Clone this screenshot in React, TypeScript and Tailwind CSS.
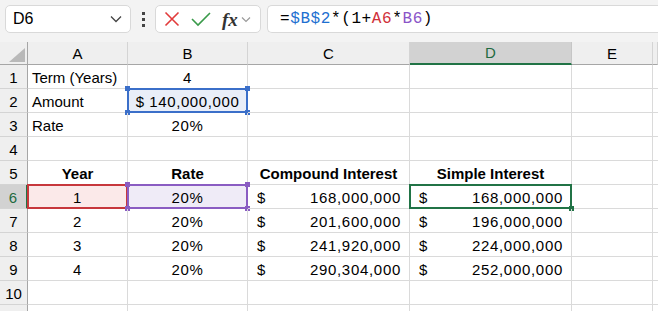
import React from 'react';

const cols = ['A', 'B', 'C', 'D', 'E', ''];

type Cell = { text?: string; align?: 'left' | 'center'; bold?: boolean; money?: string };

const rows: Cell[][] = [
  [{ text: 'Term (Years)', align: 'left' }, { text: '4' }, {}, {}],
  [{ text: 'Amount', align: 'left' }, { text: '$ 140,000,000' }, {}, {}],
  [{ text: 'Rate', align: 'left' }, { text: '20%' }, {}, {}],
  [{}, {}, {}, {}],
  [{ text: 'Year', bold: true }, { text: 'Rate', bold: true }, { text: 'Compound Interest', bold: true }, { text: 'Simple Interest', bold: true }],
  [{ text: '1' }, { text: '20%' }, { money: '168,000,000' }, { money: '168,000,000' }],
  [{ text: '2' }, { text: '20%' }, { money: '201,600,000' }, { money: '196,000,000' }],
  [{ text: '3' }, { text: '20%' }, { money: '241,920,000' }, { money: '224,000,000' }],
  [{ text: '4' }, { text: '20%' }, { money: '290,304,000' }, { money: '252,000,000' }],
  [{}, {}, {}, {}],
  [{}, {}, {}, {}],
];

// highlight boxes drawn over cells (formula references + active cell)
const marks: Record<string, { border: string; bg: string; handle: string; handles: 'all' | 'corner' | 'ticks' }> = {
  '1-1': { border: 'border-[#3b6fc9]', bg: 'bg-[#e9eef8]', handle: 'bg-[#3b6fc9]', handles: 'all' },
  '5-0': { border: 'border-[#c7373c]', bg: 'bg-[#fbe9e9]', handle: 'bg-[#c7373c]', handles: 'ticks' },
  '5-1': { border: 'border-[#8a5cc2]', bg: 'bg-[#efebf7]', handle: 'bg-[#8a5cc2]', handles: 'all' },
  '5-3': { border: 'border-[#217346]', bg: 'bg-white', handle: 'bg-[#217346]', handles: 'corner' },
};

const Handle = ({ cls, pos }: { cls: string; pos: string }) => (
  <div className={`absolute w-[5px] h-[5px] ${cls} ${pos}`} />
);

const SheetCell = ({ cell, r, c }: { cell: Cell; r: number; c: number }) => {
  const m = marks[`${r}-${c}`];
  const isLast = r === 10;
  const isNum = !!cell.text && /^[$0-9]/.test(cell.text);
  return (
    <div
      className={`relative flex items-center h-[24px] pt-[3px] border-r border-[#dadada] ${isLast ? '' : 'border-b'} ${
        cell.align === 'left' ? 'justify-start pl-[4px]' : 'justify-center'
      }`}
    >
      {m && (
        <div className={`absolute left-[-1px] right-[-1px] top-[-1px] bottom-[-1px] border-2 ${m.border} ${m.bg}`}>
          {m.handles === 'all' && (
            <>
              <Handle cls={m.handle} pos="left-[-4px] top-[-4px]" />
              <Handle cls={m.handle} pos="right-[-4px] top-[-4px]" />
              <Handle cls={m.handle} pos="left-[-4px] bottom-[-4px]" />
              <Handle cls={m.handle} pos="right-[-4px] bottom-[-4px]" />
            </>
          )}
          {m.handles === 'corner' && <Handle cls={m.handle} pos="right-[-4px] bottom-[-4px]" />}
        </div>
      )}
      {cell.money ? (
        <div className="relative flex w-full justify-between pl-[9px] pr-[8px]">
          <span>$</span>
          <span className="tracking-[0.7px]">{cell.money}</span>
        </div>
      ) : (
        <span className={`relative ${cell.bold ? 'font-bold' : ''} ${isNum ? 'tracking-[0.6px]' : ''}`}>{cell.text}</span>
      )}
    </div>
  );
};

export default function App() {
  return (
    <div className="w-[658px] h-[311px] overflow-hidden bg-white text-[15px] text-black" style={{ fontFamily: '"Liberation Sans", Arial, sans-serif' }}>
      {/* formula bar */}
      <div className="flex items-center h-[42px] bg-[#f3f3f3] pl-[5px] pb-[4px] gap-[6px]">
        <div className="flex items-center justify-between w-[126px] h-[28px] bg-white border border-[#d9d9d9] rounded-[5px] pl-[7px] pr-[8px]">
          <span className="text-[16px]">D6</span>
          <svg width="12" height="8" viewBox="0 0 12 8" fill="none" stroke="#444" strokeWidth="1.3">
            <path d="M1 1.5 L6 6.5 L11 1.5" />
          </svg>
        </div>
        <div className="flex flex-col gap-[3px] w-[12px] items-center">
          <div className="w-[3px] h-[3px] bg-[#444]" />
          <div className="w-[3px] h-[3px] bg-[#444]" />
          <div className="w-[3px] h-[3px] bg-[#444]" />
        </div>
        <div className="flex items-center w-[106px] h-[28px] bg-white border border-[#d9d9d9] rounded-[5px] pl-[8px] gap-[11px]">
          <svg width="16" height="16" viewBox="0 0 16 16" stroke="#e23b3b" strokeWidth="1.6" fill="none">
            <path d="M1.5 1.5 L14.5 14.5 M14.5 1.5 L1.5 14.5" />
          </svg>
          <svg width="20" height="16" viewBox="0 0 20 16" stroke="#3a9a4a" strokeWidth="1.6" fill="none">
            <path d="M1 8 L7 14 L19 2" />
          </svg>
          <div className="flex items-center gap-[3px]">
            <span className="italic font-bold text-[#333] text-[19px] leading-none" style={{ fontFamily: '"Liberation Serif", serif' }}>fx</span>
            <svg width="10" height="7" viewBox="0 0 10 7" fill="none" stroke="#9a9a9a" strokeWidth="1.2">
              <path d="M1 1.5 L5 5.5 L9 1.5" />
            </svg>
          </div>
        </div>
        <div className="flex items-center flex-1 h-[28px] bg-white border border-[#d9d9d9] rounded-l-[5px] border-r-0 pl-[12px] text-[16px] tracking-[0.6px]" style={{ fontFamily: '"Liberation Mono", monospace' }}>
          <span>=</span>
          <span className="text-[#1d6fd0]">$B$2</span>
          <span>*(1+</span>
          <span className="text-[#d0313a]">A6</span>
          <span>*</span>
          <span className="text-[#8a55c8]">B6</span>
          <span>)</span>
        </div>
      </div>

      {/* grid */}
      <div className="grid grid-cols-[28px_100px_120px_162px_162px_81px_1fr]">
        {/* column headers */}
        <div className="relative h-[23px] bg-[#efefef] border-r border-b border-[#a6a6a6]">
          <svg className="absolute left-[9px] top-[6px]" width="16" height="14" viewBox="0 0 16 14">
            <polygon points="16,0 16,14 0,14" fill="#b9b9b9" />
          </svg>
        </div>
        {cols.map((c, i) => (
          <div
            key={i}
            className={`flex items-center justify-center h-[23px] pt-[2px] border-r ${
              c === 'D' ? 'bg-[#d2d2d2] text-[#1e6b41] border-b-2 border-b-[#217346] border-r-[#c6c6c6]' : 'bg-[#efefef] border-b border-[#a6a6a6] border-r-[#d4d4d4]'
            } ${c === 'E' ? 'border-r-[#a6a6a6]' : ''}`}
          >
            {c}
          </div>
        ))}

        {rows.map((row, r) => (
          <React.Fragment key={r}>
            <div
              className={`flex items-center justify-center h-[24px] pt-[3px] border-b border-b-[#d4d4d4] ${
                r === 5 ? 'bg-[#d2d2d2] text-[#1e6b41] border-r-2 border-r-[#217346]' : 'bg-[#efefef] border-r border-r-[#a6a6a6]'
              }`}
            >
              {r < 10 ? r + 1 : ''}
            </div>
            {row.map((cell, c) => (
              <SheetCell key={c} cell={cell} r={r} c={c} />
            ))}
            <div className="h-[24px] border-r border-b border-[#dadada]" />
            <div className="h-[24px] border-b border-[#dadada]" />
          </React.Fragment>
        ))}
      </div>
    </div>
  );
}
